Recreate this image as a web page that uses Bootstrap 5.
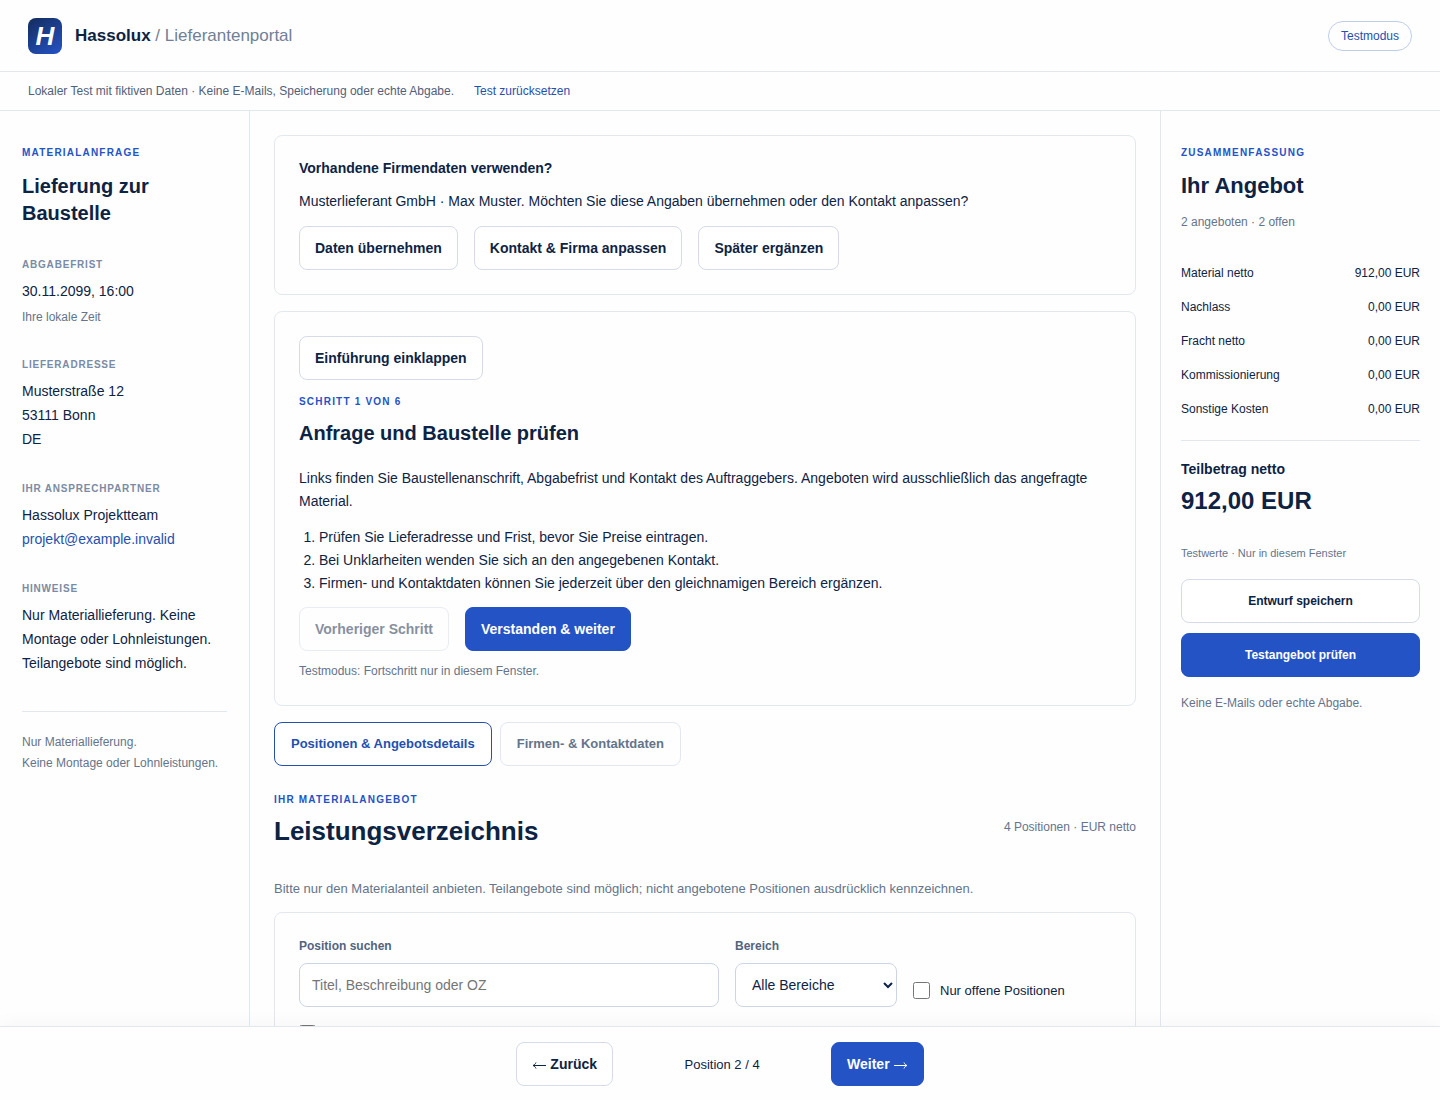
<!DOCTYPE html>
<html lang="de">
<head>
<meta charset="utf-8">
<meta name="viewport" content="width=device-width, initial-scale=1">
<title>Hassolux / Lieferantenportal</title>
<link href="https://cdn.jsdelivr.net/npm/bootstrap@5.3.0/dist/css/bootstrap.min.css" rel="stylesheet">
<style>
:root { --ink: #0d2344; --blue: #2453c6; --link: #2450b0; --muted-ink: #64748b; --line: #e2e8f0; --edge: #d5dbe8; }
body { font-family: "Liberation Sans", Arial, sans-serif; font-size: 14px; line-height: 23px; color: var(--ink); background: #fefefe; }
a { color: var(--link); text-decoration: none; }
a:hover { text-decoration: underline; }
h1, h2, h3, p, dl, dd, dt { margin: 0; }
h1, h2, h3 { font-weight: 700; }
.topbar { height: 72px; padding: 0 28px; border-bottom: 1px solid var(--line); }
.brand { gap: 13px; }
.logo { width: 34px; height: 36px; border-radius: 8px; background: linear-gradient(145deg, #142c5c, #2453c6); color: #fff; font-size: 26px; font-weight: 700; font-style: italic; line-height: 36px; }
.brandname { font-size: 17px; color: #718096; }
.brandname strong { color: var(--ink); }
.mode-pill { font-size: 12px; line-height: 18px; padding: 5px 12px; border: 1px solid #bfcdea; color: var(--link); }
.notice { padding: 8px 28px 7px; gap: 20px; font-size: 12px; border-bottom: 1px solid var(--line); color: #52607a; }
.scroller { overflow: auto; scrollbar-width: none; }
.scroller::-webkit-scrollbar { display: none; }
.side-l { flex: 0 0 250px; padding: 34px 22px; border-right: 1px solid var(--line); }
.side-r { flex: 0 0 280px; padding: 34px 20px; border-left: 1px solid var(--line); }
.main-col { padding: 24px; min-width: 0; }
.eyebrow { font-size: 10px; font-weight: 700; line-height: 16px; letter-spacing: .12em; text-transform: uppercase; color: var(--blue); }
.side-l h2 { font-size: 20px; line-height: 27px; margin: 12px 0 30px; }
.facts dt { font-size: 10px; line-height: 16px; letter-spacing: .08em; text-transform: uppercase; color: #7a8ba3; margin-bottom: 6px; }
.facts dd { line-height: 24px; margin-bottom: 30px; }
.note { font-size: 12px; line-height: 21px; color: var(--muted-ink); }
.facts .note { display: block; margin-top: 4px; margin-bottom: -1px; }
.side-foot { border-top: 1px solid var(--line); padding-top: 20px; margin-top: 36px; }
.panel { border: 1px solid var(--line); border-radius: 8px; padding: 24px; margin-bottom: 16px; }
.panel h3 { font-size: 14px; line-height: 16px; margin-bottom: 14px; }
.panel h2 { font-size: 20px; line-height: 26px; margin: 10px 0 21px; }
.panel ol { padding-left: 20px; margin: 13px 0 12px; }
.btn { --bs-btn-font-size: 14px; --bs-btn-font-weight: 700; --bs-btn-line-height: 20px; --bs-btn-padding-x: 15px; --bs-btn-padding-y: 11px; --bs-btn-border-radius: 8px; white-space: nowrap; }
.btn-plain { --bs-btn-color: var(--ink); --bs-btn-border-color: var(--edge); --bs-btn-bg: #fff; --bs-btn-hover-border-color: var(--blue); --bs-btn-disabled-color: var(--ink); --bs-btn-disabled-border-color: var(--edge); --bs-btn-disabled-opacity: .5; }
.btn-solid { --bs-btn-color: #fff; --bs-btn-bg: var(--blue); --bs-btn-border-color: var(--blue); --bs-btn-hover-color: #fff; --bs-btn-hover-bg: #1c429f; }
.btn-tab { --bs-btn-font-size: 13px; --bs-btn-padding-x: 16px; --bs-btn-color: var(--muted-ink); --bs-btn-border-color: var(--line); --bs-btn-active-color: var(--link); --bs-btn-active-border-color: var(--link); --bs-btn-active-bg: #fff; }
.action-row { margin-top: 13px; }
.step-label { margin-top: 14px; }
.progress-note { margin-top: 10px; line-height: 20px; }
.side-actions { gap: 10px; }
.list-head { margin: 26px 0 31px; }
.list-head h1 { font-size: 26px; line-height: 32px; margin-top: 7px; }
.intro { font-size: 13px; line-height: 21px; color: var(--muted-ink); margin-bottom: 13px; }
.field-label { font-size: 12px; font-weight: 700; line-height: 18px; color: #52647e; margin-bottom: 8px; display: block; }
.field { display: block; width: 100%; height: 44px; border: 1px solid #ccd5e3; border-radius: 8px; padding: 0 12px; background: #fff; color: var(--ink); font-size: 14px; }
.field::placeholder { color: #757575; }
.filters { gap: 16px; }
.search-cell { flex: 0 1 420px; }
.area-cell { flex: 0 0 162px; }
.tick { gap: 10px; font-size: 13px; margin-bottom: 5px; }
.tick input, .tick-all { width: 17px; height: 17px; margin: 0; }
.tick-all { display: block; margin-top: 18px; }
.side-r h2 { font-size: 22px; line-height: 30px; margin: 10px 0 11px; }
.sums { margin-top: 23px; padding-bottom: 14px; border-bottom: 1px solid var(--line); font-size: 12px; }
.sums div { line-height: 34px; }
.total-label { margin-top: 17px; }
.total { font-size: 24px; font-weight: 700; line-height: 32px; margin: 4px 0 26px; }
.fine { font-size: 11px; line-height: 20px; color: var(--muted-ink); }
.side-r .btn { --bs-btn-font-size: 12px; }
.pager { border-top: 1px solid var(--line); background: #fefefe; padding: 15px 0 14px; box-shadow: 0 -4px 16px rgba(15, 35, 70, .03); z-index: 2; gap: 24px; }
.pager span { min-width: 170px; font-size: 13px; }
.arrow { width: 14px; height: 8px; fill: none; stroke: currentColor; stroke-width: 1; }
</style>
</head>
<body>
<div class="vh-100 d-flex flex-column">
  <header class="topbar d-flex align-items-center justify-content-between flex-shrink-0">
    <div class="brand d-flex align-items-center">
      <span class="logo text-center" aria-hidden="true">H</span>
      <span class="brandname"><strong>Hassolux</strong> / Lieferantenportal</span>
    </div>
    <span class="mode-pill rounded-pill">Testmodus</span>
  </header>
  <div class="notice d-flex flex-shrink-0">
    <span>Lokaler Test mit fiktiven Daten · Keine E-Mails, Speicherung oder echte Abgabe.</span>
    <a href="#reset">Test zurücksetzen</a>
  </div>

  <div class="d-flex flex-grow-1 overflow-hidden">
    <aside class="side-l scroller">
      <div class="eyebrow">Materialanfrage</div>
      <h2>Lieferung zur Baustelle</h2>
      <dl class="facts">
        <dt>Abgabefrist</dt>
        <dd>30.11.2099, 16:00<span class="note">Ihre lokale Zeit</span></dd>
        <dt>Lieferadresse</dt>
        <dd>Musterstraße 12<br>53111 Bonn<br>DE</dd>
        <dt>Ihr Ansprechpartner</dt>
        <dd>Hassolux Projektteam<br><a href="mailto:projekt@example.invalid">projekt@example.invalid</a></dd>
        <dt>Hinweise</dt>
        <dd>Nur Materiallieferung. Keine Montage oder Lohnleistungen. Teilangebote sind möglich.</dd>
      </dl>
      <p class="side-foot note">Nur Materiallieferung.<br>Keine Montage oder Lohnleistungen.</p>
    </aside>

    <main class="main-col scroller flex-grow-1">
      <section class="panel">
        <h3>Vorhandene Firmendaten verwenden?</h3>
        <p>Musterlieferant GmbH · Max Muster. Möchten Sie diese Angaben übernehmen oder den Kontakt anpassen?</p>
        <div class="d-flex flex-wrap gap-3 action-row">
          <button type="button" class="btn btn-plain">Daten übernehmen</button>
          <button type="button" class="btn btn-plain">Kontakt &amp; Firma anpassen</button>
          <button type="button" class="btn btn-plain">Später ergänzen</button>
        </div>
      </section>

      <section class="panel">
        <button type="button" class="btn btn-plain">Einführung einklappen</button>
        <div class="eyebrow step-label">Schritt 1 von 6</div>
        <h2>Anfrage und Baustelle prüfen</h2>
        <p>Links finden Sie Baustellenanschrift, Abgabefrist und Kontakt des Auftraggebers. Angeboten wird ausschließlich das angefragte Material.</p>
        <ol>
          <li>Prüfen Sie Lieferadresse und Frist, bevor Sie Preise eintragen.</li>
          <li>Bei Unklarheiten wenden Sie sich an den angegebenen Kontakt.</li>
          <li>Firmen- und Kontaktdaten können Sie jederzeit über den gleichnamigen Bereich ergänzen.</li>
        </ol>
        <div class="d-flex flex-wrap gap-3">
          <button type="button" class="btn btn-plain" disabled>Vorheriger Schritt</button>
          <button type="button" class="btn btn-solid">Verstanden &amp; weiter</button>
        </div>
        <p class="note progress-note">Testmodus: Fortschritt nur in diesem Fenster.</p>
      </section>

      <nav class="d-flex gap-2" aria-label="Bereiche">
        <button type="button" class="btn btn-tab active">Positionen &amp; Angebotsdetails</button>
        <button type="button" class="btn btn-tab">Firmen- &amp; Kontaktdaten</button>
      </nav>

      <div class="list-head d-flex justify-content-between align-items-center">
        <div>
          <div class="eyebrow">Ihr Materialangebot</div>
          <h1>Leistungsverzeichnis</h1>
        </div>
        <span class="note mt-3">4 Positionen · EUR netto</span>
      </div>
      <p class="intro">Bitte nur den Materialanteil anbieten. Teilangebote sind möglich; nicht angebotene Positionen ausdrücklich kennzeichnen.</p>

      <section class="panel">
        <div class="filters d-flex align-items-end">
          <div class="search-cell">
            <label class="field-label" for="q">Position suchen</label>
            <input class="field" id="q" type="search" placeholder="Titel, Beschreibung oder OZ">
          </div>
          <div class="area-cell">
            <label class="field-label" for="area">Bereich</label>
            <select class="field" id="area"><option>Alle Bereiche</option></select>
          </div>
          <label class="tick d-flex align-items-center"><input type="checkbox">Nur offene Positionen</label>
        </div>
        <input class="tick-all" type="checkbox" aria-label="Alle Positionen">
      </section>
    </main>

    <aside class="side-r scroller">
      <div class="eyebrow">Zusammenfassung</div>
      <h2>Ihr Angebot</h2>
      <p class="note">2 angeboten · 2 offen</p>
      <dl class="sums">
        <div class="d-flex justify-content-between"><dt class="fw-normal">Material netto</dt><dd>912,00 EUR</dd></div>
        <div class="d-flex justify-content-between"><dt class="fw-normal">Nachlass</dt><dd>0,00 EUR</dd></div>
        <div class="d-flex justify-content-between"><dt class="fw-normal">Fracht netto</dt><dd>0,00 EUR</dd></div>
        <div class="d-flex justify-content-between"><dt class="fw-normal">Kommissionierung</dt><dd>0,00 EUR</dd></div>
        <div class="d-flex justify-content-between"><dt class="fw-normal">Sonstige Kosten</dt><dd>0,00 EUR</dd></div>
      </dl>
      <p class="fw-bold total-label">Teilbetrag netto</p>
      <p class="total">912,00 EUR</p>
      <p class="fine">Testwerte · Nur in diesem Fenster</p>
      <div class="d-grid mt-3 side-actions">
        <button type="button" class="btn btn-plain">Entwurf speichern</button>
        <button type="button" class="btn btn-solid">Testangebot prüfen</button>
      </div>
      <p class="note mt-3">Keine E-Mails oder echte Abgabe.</p>
    </aside>
  </div>

  <footer class="pager d-flex justify-content-center align-items-center flex-shrink-0 position-relative">
    <button type="button" class="btn btn-plain"><svg class="arrow" viewBox="0 0 14 8" aria-hidden="true"><path d="M14 4.5H1M4 1.5C3.4 3 2.500 4 1 4.500 2.500 5 3.400 6 4 7.500"/></svg> Zurück</button>
    <span class="text-center">Position 2 / 4</span>
    <button type="button" class="btn btn-solid">Weiter <svg class="arrow" viewBox="0 0 14 8" aria-hidden="true"><path d="M0 4.500H13M10 1.500C10.600 3 11.500 4 13 4.500 11.500 5 10.600 6 10 7.500"/></svg></button>
  </footer>
</div>
<script src="https://cdn.jsdelivr.net/npm/bootstrap@5.3.0/dist/js/bootstrap.bundle.min.js"></script>
</body>
</html>
